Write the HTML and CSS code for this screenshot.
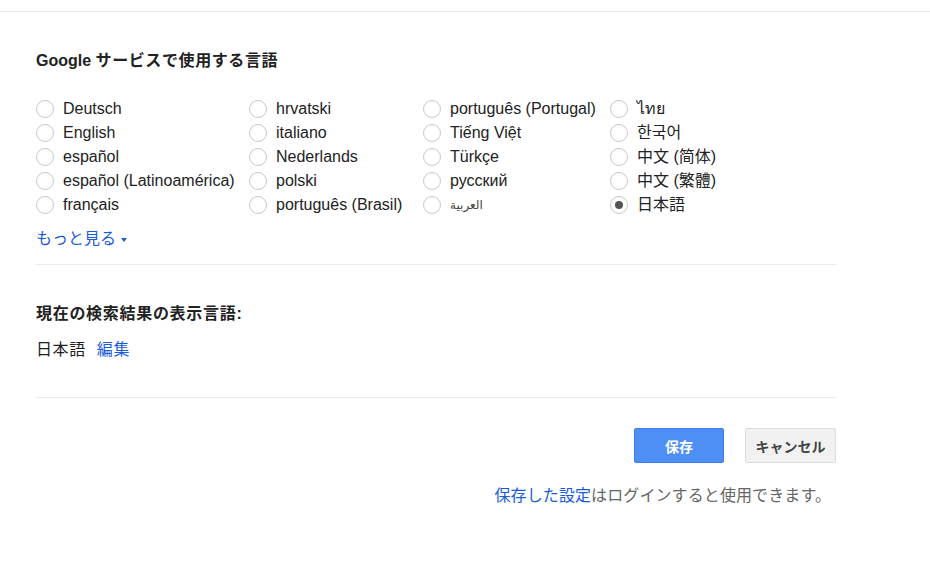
FILE: index.html
```html
<!DOCTYPE html>
<html lang="ja">
<head>
    <meta charset="UTF-8">
    <title>検索設定 - 言語</title>
    <link rel="stylesheet" href="styles.css">
</head>
<body>

    <div class="top-bar"></div>

    <div class="settings">
        <h2 class="section-title title-lang">Google <span class="wide">サービスで使用する言語</span></h2>

        <div class="lang-grid">
            <label class="lang"><span class="radio"></span>Deutsch</label>
            <label class="lang"><span class="radio"></span>hrvatski</label>
            <label class="lang"><span class="radio"></span>português (Portugal)</label>
            <label class="lang"><span class="radio"></span>ไทย</label>

            <label class="lang"><span class="radio"></span>English</label>
            <label class="lang"><span class="radio"></span>italiano</label>
            <label class="lang"><span class="radio"></span>Tiếng Việt</label>
            <label class="lang"><span class="radio"></span>한국어</label>

            <label class="lang"><span class="radio"></span>español</label>
            <label class="lang"><span class="radio"></span>Nederlands</label>
            <label class="lang"><span class="radio"></span>Türkçe</label>
            <label class="lang"><span class="radio"></span>中文 (简体)</label>

            <label class="lang"><span class="radio"></span>español (Latinoamérica)</label>
            <label class="lang"><span class="radio"></span>polski</label>
            <label class="lang"><span class="radio"></span>русский</label>
            <label class="lang"><span class="radio"></span>中文 (繁體)</label>

            <label class="lang"><span class="radio"></span>français</label>
            <label class="lang"><span class="radio"></span>português (Brasil)</label>
            <label class="lang"><span class="radio"></span><span class="arabic">العربية</span></label>
            <label class="lang"><span class="radio checked"></span>日本語</label>
        </div>

        <a class="link more-link" href="#">もっと見る<span class="caret"></span></a>

        <div class="divider"></div>

        <h2 class="section-title title-current">現在の検索結果の表示言語:</h2>
        <div class="current-lang">日本語<a class="link edit-link" href="#">編集</a></div>

        <div class="divider divider-bottom"></div>

        <div class="actions">
            <button class="btn btn-save">保存</button>
            <button class="btn btn-cancel">キャンセル</button>
        </div>

        <p class="note"><a class="link" href="#">保存した設定</a>はログインすると使用できます。</p>
    </div>

</body>
</html>
```

FILE: styles.css
```css
:root {
    --text-color: #222;
    --muted-color: #666;
    --link-color: #1a5bd6;
    --line-color: #ebebeb;
    --radio-border: #c8c8c8;
    --radio-dot: #555;
}

* {
    margin: 0;
    padding: 0;
    box-sizing: border-box;
}

body {
    font-family: "Liberation Sans", Arial, "Noto Sans CJK JP", "Noto Sans CJK KR", "DejaVu Sans", sans-serif;
    font-size: 16px;
    line-height: 20px;
    color: var(--text-color);
    background: #fff;
}

.top-bar {
    height: 12px;
    border-bottom: 1px solid var(--line-color);
}

.settings {
    width: 800px;
    margin-left: 36px;
}

.section-title {
    font-size: 16px;
    font-weight: bold;
    line-height: 20px;
    color: #222;
}

.title-lang {
    margin-top: 39px;
}

.title-lang .wide {
    letter-spacing: 0.6px;
}

.lang-grid {
    display: grid;
    grid-template-columns: 213px 174px 187px auto;
    grid-auto-rows: 24px;
    margin-top: 26px;
}

.lang {
    display: flex;
    align-items: center;
    gap: 9px;
    white-space: nowrap;
    cursor: pointer;
}

.radio {
    position: relative;
    flex: none;
    width: 18px;
    height: 18px;
    border: 1px solid var(--radio-border);
    border-radius: 50%;
    background: #fff;
}

.radio.checked::after {
    content: "";
    position: absolute;
    top: 4px;
    left: 4px;
    width: 8px;
    height: 8px;
    border-radius: 50%;
    background: var(--radio-dot);
}

.arabic {
    font-size: 12px;
    color: #444;
}

.link {
    color: var(--link-color);
    text-decoration: none;
}

.more-link {
    display: inline-flex;
    align-items: center;
    margin-top: 12px;
}

.caret {
    margin-left: 5px;
    margin-top: 2px;
    border-left: 3px solid transparent;
    border-right: 3px solid transparent;
    border-top: 4px solid var(--link-color);
}

.divider {
    margin-top: 15px;
    border-top: 1px solid var(--line-color);
}

.title-current {
    margin-top: 39px;
    letter-spacing: 0.7px;
}

.current-lang {
    margin-top: 16px;
    letter-spacing: 0.6px;
}

.edit-link {
    margin-left: 11px;
}

.divider-bottom {
    margin-top: 37px;
}

.actions {
    display: flex;
    justify-content: flex-end;
    gap: 21px;
    margin-top: 30px;
}

.btn {
    height: 35px;
    border-radius: 2px;
    font-family: inherit;
    font-size: 14px;
    font-weight: bold;
    cursor: pointer;
}

.btn-save {
    width: 90px;
    background: #4d8ff4;
    border: 1px solid #3b7ee8;
    color: #fff;
}

.btn-cancel {
    width: 91px;
    background: #f1f1f1;
    border: 1px solid #dcdcdc;
    color: #444;
}

.note {
    margin-top: 23px;
    padding-right: 5px;
    text-align: right;
    color: var(--muted-color);
    letter-spacing: 0.1px;
}
```
